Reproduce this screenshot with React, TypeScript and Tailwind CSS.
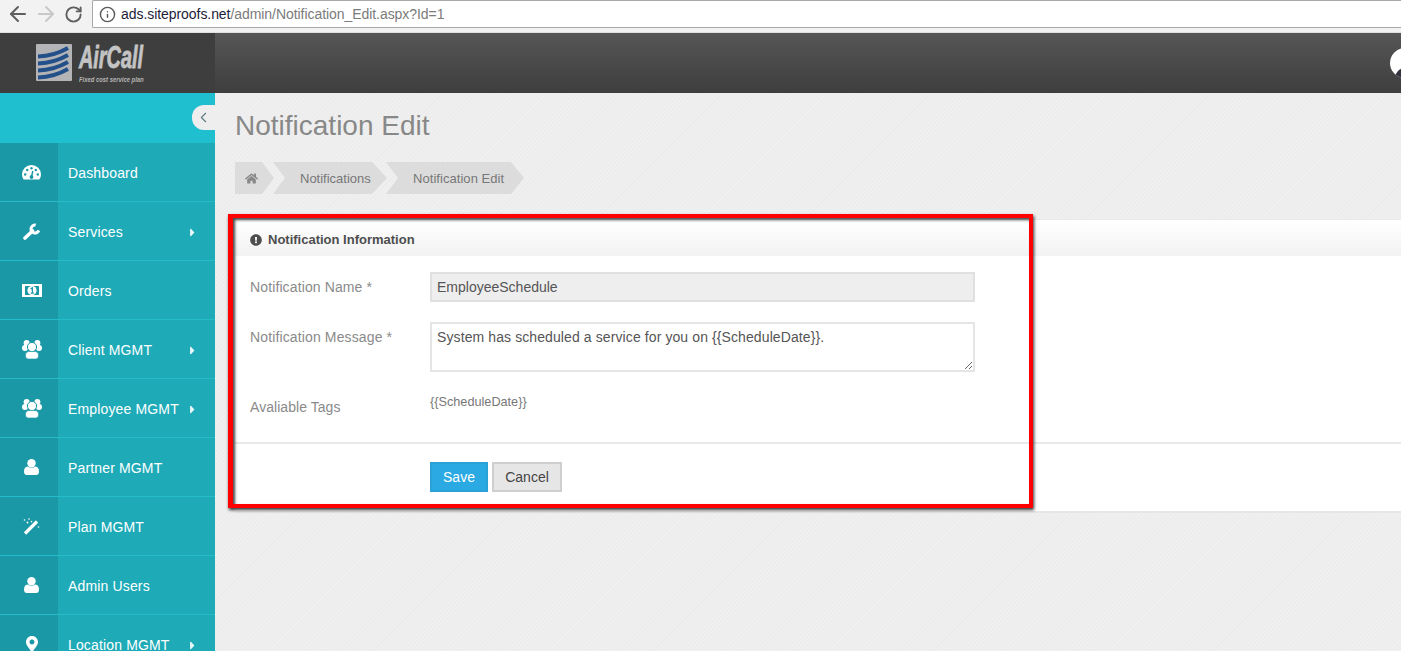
import type { ReactNode } from 'react';
import { ArrowLeft, ArrowRight, RotateCw, Info, ChevronLeft } from 'lucide-react';
import { FaMapMarkerAlt, FaCaretRight, FaHome, FaExclamationCircle } from 'react-icons/fa';

const TEAL = '#1b98a5';

function IconGauge() {
    return (
        <svg width="19" height="15" viewBox="0 0 19 15">
            <path d="M1.6 14.5Q0 12.5 0 9.5A9.5 9.5 0 0 1 19 9.5Q19 12.5 17.4 14.5Z" fill="#fff" />
            <g fill={TEAL}>
                <circle cx="3.2" cy="9.5" r="1.2" />
                <circle cx="5.2" cy="5" r="1.2" />
                <circle cx="9.5" cy="3.2" r="1.2" />
                <circle cx="13.8" cy="5" r="1.2" />
                <circle cx="15.8" cy="9.5" r="1.2" />
                <circle cx="9.5" cy="12" r="1.9" />
            </g>
            <path d="M9.5 12L10.8 6" stroke={TEAL} strokeWidth="1.4" />
        </svg>
    );
}

function IconWrench() {
    return (
        <svg width="18" height="17" viewBox="0 0 18 17" fill="none" stroke="#fff">
            <path d="M2 15L9.5 8" strokeWidth="3.6" strokeLinecap="round" />
            <path d="M12.7 2.06A4 4 0 1 0 15.76 7.37" strokeWidth="3" />
        </svg>
    );
}

function IconMoney() {
    return (
        <svg width="20" height="13" viewBox="0 0 20 13">
            <rect width="20" height="13" fill="#fff" />
            <path d="M3 2H17V11H3Z" fill={TEAL} />
            <path d="M1.5 1.5H4L1.5 4ZM18.5 1.5H16L18.5 4ZM1.5 11.5H4L1.5 9ZM18.5 11.5H16L18.5 9Z" fill="#fff" />
            <circle cx="10" cy="6.5" r="4.6" fill="#fff" />
            <path d="M8.6 4.9L10.4 3.9V9.2M8.8 9.2H11.8" stroke={TEAL} strokeWidth="1.3" fill="none" />
        </svg>
    );
}

function IconUsers() {
    return (
        <svg width="20" height="19" viewBox="0 0 20 19" fill="#fff">
            <circle cx="4.6" cy="3" r="3" />
            <circle cx="15.4" cy="3" r="3" />
            <circle cx="3" cy="8" r="3" />
            <circle cx="17" cy="8" r="3" />
            <circle cx="10" cy="7" r="4.6" stroke={TEAL} strokeWidth="1" />
            <path d="M3.5 15Q3.5 11.5 7 11.5H13Q16.5 11.5 16.5 15V16Q16.5 19 13.5 19H6.5Q3.5 19 3.5 16Z" stroke={TEAL} strokeWidth="0.6" />
        </svg>
    );
}

function IconUser() {
    return (
        <svg width="15" height="16" viewBox="0 0 15 16" fill="#fff">
            <circle cx="7.5" cy="4.2" r="4.2" />
            <path d="M0 12.5Q0 8 3.5 7.6Q7.5 10 11.5 7.6Q15 8 15 12.5Q15 16 12 16H3Q0 16 0 12.5Z" />
        </svg>
    );
}

function IconWand() {
    return (
        <svg width="17" height="17" viewBox="0 0 17 17" fill="#fff">
            <path d="M2 15.5L14 3.5" stroke="#fff" strokeWidth="3.2" />
            <circle cx="1.5" cy="2" r="0.8" />
            <circle cx="6" cy="1" r="0.8" />
            <circle cx="4.5" cy="4.5" r="0.9" />
            <circle cx="8.5" cy="3.6" r="0.8" />
            <circle cx="15.5" cy="9" r="0.8" />
        </svg>
    );
}

const menu = [
    { icon: <IconGauge />, label: 'Dashboard' },
    { icon: <IconWrench />, label: 'Services', more: true },
    { icon: <IconMoney />, label: 'Orders' },
    { icon: <IconUsers />, label: 'Client MGMT', more: true },
    { icon: <IconUsers />, label: 'Employee MGMT', more: true },
    { icon: <IconUser />, label: 'Partner MGMT' },
    { icon: <IconWand />, label: 'Plan MGMT' },
    { icon: <IconUser />, label: 'Admin Users' },
    { icon: <FaMapMarkerAlt size={16} />, label: 'Location MGMT', more: true },
];

function BrowserBar() {
    return (
        <div className="h-[33px] shrink-0 bg-[#f2f2f2] border-b border-[#e0e0e0] flex items-start">
            <div className="w-[92px] h-[28px] flex items-center pl-[6px] text-[#5f5f5f]">
                <ArrowLeft size={24} strokeWidth={2} />
                <ArrowRight size={24} strokeWidth={2} className="ml-[4px] text-[#c8c8c8]" />
                <RotateCw size={19} strokeWidth={2.4} className="ml-[6px]" />
            </div>
            <div className="flex-1 h-[28px] bg-white border border-[#a9a9a9] border-r-0 rounded-l-[2px] flex items-center pl-[6px] text-[14px] tracking-[-0.06px]">
                <Info size={17} strokeWidth={2} className="text-[#5a5a5a] mr-[5px]" />
                <span className="text-[#1c1c3a]">ads.siteproofs.net</span>
                <span className="text-[#7b7b7b]">/admin/Notification_Edit.aspx?Id=1</span>
            </div>
        </div>
    );
}

function Logo() {
    return (
        <div className="flex items-start pl-[36px] pt-[11px]">
            <svg width="36" height="37" viewBox="0 0 36 37">
                <rect width="36" height="37" rx="1" fill="#b4b4b6" />
                <g stroke="#24508a" strokeWidth="4" fill="none">
                    <path d="M2 12.5Q18 12 32 4" />
                    <path d="M2 19.5Q18 19 32 11" />
                    <path d="M2 26.5Q18 26 32 18" />
                    <path d="M2 33.5Q18 33 32 25" />
                </g>
            </svg>
            <div className="ml-[7px] text-[#c4c4c4] italic font-bold">
                <div className="text-[32px] leading-[27px] w-[66px] origin-left scale-x-[0.62] whitespace-nowrap [-webkit-text-stroke:0.8px_#c4c4c4]">
                    AirCall
                </div>
                <div className="text-[7px] leading-[8px] mt-[5px] origin-left scale-x-[0.84] whitespace-nowrap text-[#b5b5b5]">
                    Fixed cost service plan
                </div>
            </div>
        </div>
    );
}

function Header() {
    return (
        <div className="h-[60px] shrink-0 flex relative overflow-hidden">
            <div className="w-[215px] bg-[#3e3e3e]">
                <Logo />
            </div>
            <div className="flex-1 bg-gradient-to-b from-[#565656] to-[#3e3e3e]" />
            <div className="absolute left-[1390px] top-[15px] w-[30px] h-[30px] rounded-full bg-white overflow-hidden">
                <div className="absolute left-[5px] top-[20px] w-[20px] h-[20px] rounded-full bg-[#33323f]" />
            </div>
        </div>
    );
}

function Sidebar() {
    return (
        <div className="w-[215px] shrink-0 bg-[#1eaab7] relative">
            <div className="h-[50px] bg-[#20bfcf] relative">
                <div className="absolute right-0 top-[12px] w-[23px] h-[25px] bg-[#eeeeee] rounded-l-[12px] flex items-center justify-center text-[#5e7c80]">
                    <ChevronLeft size={17} strokeWidth={1.6} />
                </div>
            </div>
            {menu.map((m, i) => (
                <div key={i} className="h-[59px] flex border-b border-[#25bcc9] text-white text-[14px] tracking-[0.15px]">
                    <div className="w-[58px] bg-[#1b98a5] flex items-center justify-center pl-[5px]">
                        {m.icon}
                    </div>
                    <div className="flex-1 flex items-center pl-[10px] pt-[2px] relative">
                        {m.label}
                        {m.more && <FaCaretRight size={13} className="absolute right-[16px] top-[24px] text-[#e8f7f8]" />}
                    </div>
                </div>
            ))}
        </div>
    );
}

function Crumb({ className, children }: { className: string; children: ReactNode }) {
    return (
        <div className={`h-[32px] bg-[#dcdcdc] flex items-center pt-[1px] text-[13px] text-[#777] ${className}`}>
            {children}
        </div>
    );
}

function Breadcrumb() {
    return (
        <div className="flex mt-[20px]">
            <Crumb className="w-[39px] pl-[10px] [clip-path:polygon(0_0,27px_0,100%_50%,27px_100%,0_100%)]">
                <FaHome size={13} className="text-[#888]" />
            </Crumb>
            <Crumb className="w-[114px] -ml-px pl-[27px] [clip-path:polygon(0_0,99px_0,100%_50%,99px_100%,0_100%,12px_50%)]">
                Notifications
            </Crumb>
            <Crumb className="w-[138px] -ml-px pl-[27px] tracking-[0.05px] [clip-path:polygon(0_0,125px_0,100%_50%,125px_100%,0_100%,12px_50%)]">
                Notification Edit
            </Crumb>
        </div>
    );
}

function Panel() {
    return (
        <div className="mt-[25px] h-[294px] bg-white border-b-2 border-[#e6e6e6] flex flex-col">
            <div className="h-[37px] shrink-0 bg-gradient-to-b from-white to-[#f2f2f2] border-t border-[#e8e8e8] flex items-center pl-[15px] pt-[3px] text-[13px] font-bold text-[#4d4d4d]">
                <FaExclamationCircle size={12} className="mr-[6px]" />
                Notification Information
            </div>
            <div className="h-[188px] shrink-0 border-b-2 border-[#e9e9e9] pt-[16px] text-[14px] text-[#8a8a8a]">
                <div className="flex items-center h-[30px]">
                    <label className="w-[195px] pl-[15px] tracking-[0.12px]">Notification Name *</label>
                    <input
                        readOnly
                        value="EmployeeSchedule"
                        className="w-[545px] h-[30px] bg-[#eeeeee] border-2 border-[#e0e0e0] px-[5px] text-[#555] outline-none"
                    />
                </div>
                <div className="flex items-start mt-[20px]">
                    <label className="w-[195px] pl-[15px] pt-[5px] tracking-[0.13px]">Notification Message *</label>
                    <textarea
                        readOnly
                        value="System has scheduled a service for you on {{ScheduleDate}}."
                        className="block w-[545px] h-[50px] bg-white border-2 border-[#e5e5e5] px-[5px] py-[3px] text-[#555] tracking-[0.1px] outline-none resize-y"
                    />
                </div>
                <div className="flex items-start mt-[21px]">
                    <label className="w-[195px] pl-[15px] pt-[4px] tracking-[0.05px]">Avaliable Tags</label>
                    <span className="text-[12.7px] leading-[16px] pt-px text-[#777]">{'{{ScheduleDate}}'}</span>
                </div>
            </div>
            <div className="flex gap-[4px] pl-[195px] pt-[18px]">
                <button className="w-[58px] h-[30px] bg-[#2aa9e2] border-2 border-[#2aa2d8] text-white text-[14px]">Save</button>
                <button className="w-[70px] h-[30px] bg-[#e6e6e6] border-2 border-[#cfcfcf] text-[#444] text-[14px]">Cancel</button>
            </div>
        </div>
    );
}

export default function App() {
    return (
        <div className="w-[1401px] h-[651px] overflow-hidden flex flex-col relative font-['Liberation_Sans',Arial,sans-serif]">
            <BrowserBar />
            <Header />
            <div className="flex flex-1 min-h-0">
                <Sidebar />
                <div className="flex-1 pl-[20px] pt-[17px] bg-[repeating-linear-gradient(135deg,#f0f0f0_0,#f0f0f0_1.5px,#ececec_1.5px,#ececec_3px)]">
                    <h1 className="text-[28px] leading-[32px] text-[#888]">Notification Edit</h1>
                    <Breadcrumb />
                    <Panel />
                </div>
            </div>
            {/* red annotation drawn over the shot */}
            <div className="absolute left-[228px] top-[214px] w-[805px] h-[294px] border-[#fe0000] border-t-4 border-r-4 border-b-4 border-l-[5px] shadow-[1px_2px_3px_rgba(0,0,0,0.8),inset_2px_2px_3px_rgba(0,0,0,0.7)]" />
        </div>
    );
}
